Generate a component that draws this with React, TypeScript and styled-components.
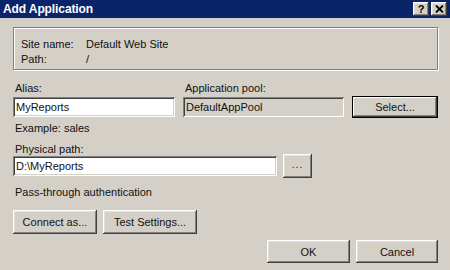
import React from "react";
import styled, { createGlobalStyle } from "styled-components";

const GlobalStyle = createGlobalStyle`
  html, body {
    margin: 0;
    padding: 0;
    background: #d4d0c8;
  }
`;

const raised = `
  box-shadow: inset -1px -1px #404040, inset 1px 1px #ffffff,
    inset -2px -2px #808080, inset 2px 2px #e4e1dc;
`;

const sunken = `
  box-shadow: inset 1px 1px #808080, inset -1px -1px #ffffff,
    inset 2px 2px #404040, inset -2px -2px #d4d0c8;
`;

const Window = styled.div`
  width: 450px;
  height: 270px;
  background: #d4d0c8;
  font-family: "Liberation Sans", Arial, sans-serif;
  font-size: 11px;
  color: #111;
  overflow: hidden;
`;

const TitleBar = styled.div`
  height: 18px;
  background: #0a246a;
  display: flex;
  align-items: center;
  justify-content: space-between;
  padding: 0 3px 0 3px;
`;

const Title = styled.span`
  color: #ffffff;
  font-weight: bold;
  font-size: 12px;
  letter-spacing: -0.1px;
`;

const TitleButtons = styled.div`
  display: flex;
  gap: 2px;
`;

const TitleButton = styled.div`
  width: 16px;
  height: 14px;
  background: #d4d0c8;
  ${raised}
  display: flex;
  align-items: center;
  justify-content: center;
  font-weight: bold;
  font-size: 11px;
  color: #000;
`;

const Body = styled.div`
  padding: 9px 12px 0 13px;
`;

const GroupBox = styled.div`
  height: 43px;
  box-sizing: border-box;
  border: 1px solid #808080;
  box-shadow: inset 1px 1px #ffffff, 1px 1px #ffffff;
  padding: 8px 0 0 7px;
  display: grid;
  grid-template-columns: 65px auto;
  grid-auto-rows: 15px;
  align-items: center;
`;

const Label = styled.div<{ $top?: number }>`
  height: 14px;
  line-height: 14px;
  padding-left: 2px;
  margin-top: ${(p) => p.$top ?? 0}px;
  white-space: nowrap;
`;

const PoolGrid = styled.div`
  margin-top: 11px;
  display: grid;
  grid-template-columns: 162px 161px 86px;
  column-gap: 8px;
  row-gap: 1px;
  align-items: center;
`;

const TextBox = styled.div<{ $readOnly?: boolean; $width?: number }>`
  height: 20px;
  width: ${(p) => (p.$width ? `${p.$width}px` : "auto")};
  box-sizing: border-box;
  background: ${(p) => (p.$readOnly ? "#d4d0c8" : "#ffffff")};
  ${sunken}
  padding: 0 3px;
  display: flex;
  align-items: center;
`;

const Button = styled.div<{ $width: number; $height?: number; $default?: boolean }>`
  width: ${(p) => p.$width}px;
  height: ${(p) => p.$height ?? 24}px;
  box-sizing: border-box;
  background: #d4d0c8;
  display: flex;
  align-items: center;
  justify-content: center;
  ${(p) =>
    p.$default
      ? `border: 1px solid #000; box-shadow: inset -1px -1px #404040, inset 1px 1px #ffffff, inset -2px -2px #808080;`
      : raised}
`;

const PathRow = styled.div`
  display: flex;
  align-items: center;
  gap: 6px;
  margin-top: -2px;
`;

const ButtonRow = styled.div<{ $top: number; $end?: boolean }>`
  display: flex;
  gap: 6px;
  margin-top: ${(p) => p.$top}px;
  justify-content: ${(p) => (p.$end ? "flex-end" : "flex-start")};
`;

const Ellipsis = styled.span`
  letter-spacing: 1px;
  font-size: 10px;
  margin-top: -3px;
`;

export default function App() {
  return (
    <Window>
      <GlobalStyle />
      <TitleBar>
        <Title>Add Application</Title>
        <TitleButtons>
          <TitleButton>?</TitleButton>
          <TitleButton>
            <svg width="9" height="8" viewBox="0 0 9 8">
              <path d="M1 0.5 L8 7.5 M8 0.5 L1 7.5" stroke="#000" strokeWidth="1.8" />
            </svg>
          </TitleButton>
        </TitleButtons>
      </TitleBar>
      <Body>
        <GroupBox>
          <span>Site name:</span>
          <span>Default Web Site</span>
          <span>Path:</span>
          <span>/</span>
        </GroupBox>
        <PoolGrid>
          <Label>Alias:</Label>
          <Label>Application pool:</Label>
          <span />
          <TextBox>MyReports</TextBox>
          <TextBox $readOnly>DefaultAppPool</TextBox>
          <Button $width={86} $height={22} $default>
            Select...
          </Button>
        </PoolGrid>
        <Label $top={3}>Example: sales</Label>
        <Label $top={7}>Physical path:</Label>
        <PathRow>
          <TextBox $width={264}>D:\MyReports</TextBox>
          <Button $width={29} $height={24}>
            <Ellipsis>...</Ellipsis>
          </Button>
        </PathRow>
        <Label $top={7}>Pass-through authentication</Label>
        <ButtonRow $top={11}>
          <Button $width={84}>Connect as...</Button>
          <Button $width={94}>Test Settings...</Button>
        </ButtonRow>
        <ButtonRow $top={6} $end>
          <Button $width={83} $height={23}>
            OK
          </Button>
          <Button $width={82} $height={23}>
            Cancel
          </Button>
        </ButtonRow>
      </Body>
    </Window>
  );
}
